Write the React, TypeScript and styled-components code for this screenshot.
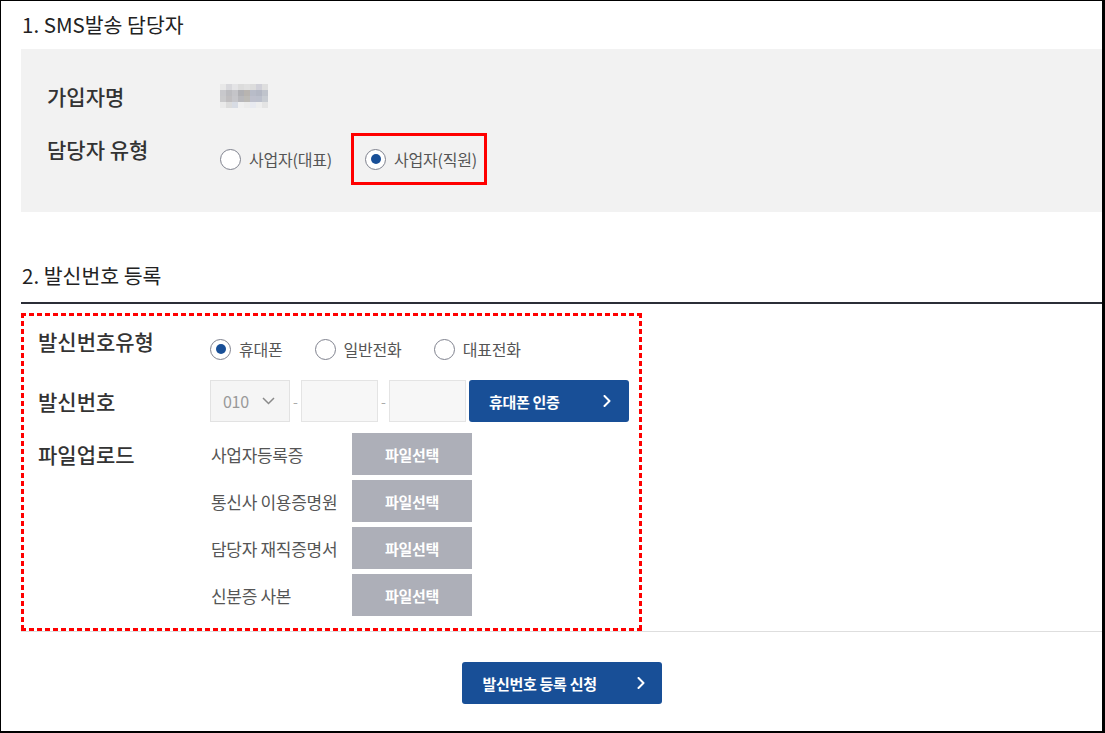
import React from 'react';
import styled, { createGlobalStyle } from 'styled-components';

const GlobalStyle = createGlobalStyle`
  html, body {
    margin: 0;
    padding: 0;
    background: #fff;
  }
  body {
    font-family: "Noto Sans CJK KR", "Noto Sans", sans-serif;
    color: #222;
  }
  * {
    box-sizing: border-box;
  }
`;

const BLUE = '#184f97';

const Frame = styled.div`
    width: 1105px;
    height: 733px;
    border-style: solid;
    border-color: #000;
    border-width: 1px 3px 2px 1px;
    padding: 0 0 0 20px;
    background: #fff;
`;

const SectionTitle = styled.h2<{ $top?: number; $line?: boolean }>`
    margin: ${(p) => p.$top || 0}px 0 0 0;
    height: ${(p) => (p.$line ? 52 : 48)}px;
    padding: 0 0 ${(p) => (p.$line ? 4 : 3)}px 1px;
    display: flex;
    align-items: center;
    font-size: 20.5px;
    font-weight: 400;
    letter-spacing: 0;
    color: #222;
    border-bottom: ${(p) => (p.$line ? '2px solid #2b2e37' : 'none')};
`;

const InfoBox = styled.div`
    background: #f2f2f2;
    height: 163px;
    padding: 31px 26px 0 26px;
    display: flex;
    flex-direction: column;
    gap: 21px;
`;

const InfoRow = styled.div`
    display: grid;
    grid-template-columns: 173px 1fr;
    align-items: start;
`;

const FieldLabel = styled.div`
    font-size: 21px;
    font-weight: 500;
    line-height: 32px;
    color: #333;
    letter-spacing: 0;
`;

const ValueCell = styled.div`
    height: 32px;
    display: flex;
    align-items: center;
`;

const RadioGroup = styled.div<{ $gap: number; $top?: number }>`
    display: flex;
    align-items: center;
    gap: ${(p) => p.$gap}px;
    margin-top: ${(p) => p.$top || 0}px;
`;

const RadioItem = styled.label`
    display: inline-flex;
    align-items: center;
    gap: 8px;
    height: 24px;
    font-size: 16px;
    color: #555;
    letter-spacing: -0.2px;
    cursor: pointer;
`;

const RadioCircle = styled.span<{ $checked?: boolean }>`
    position: relative;
    width: 21px;
    height: 21px;
    border-radius: 50%;
    border: 1.5px solid #7f828e;
    background: #fff;
    flex-shrink: 0;

    &::after {
        content: '';
        display: ${(p) => (p.$checked ? 'block' : 'none')};
        position: absolute;
        left: 50%;
        top: 50%;
        width: 10px;
        height: 10px;
        margin: -5px 0 0 -5px;
        border-radius: 50%;
        background: ${BLUE};
    }
`;

const Highlight = styled.div`
    height: 52px;
    display: flex;
    align-items: center;
    border: 3px solid #f00;
    padding: 0 7px 0 11px;
`;

const FormArea = styled.div`
    border-bottom: 1px solid #dedede;
    padding-top: 9px;
`;

const DashedFrame = styled.div`
    width: 621px;
    padding: 12px 0 15px 17px;
    background:
        repeating-linear-gradient(90deg, #f00 0 5px, transparent 5px 8px) top left / 100% 3px no-repeat,
        repeating-linear-gradient(90deg, #f00 0 5px, transparent 5px 8px) bottom left / 100% 3px no-repeat,
        repeating-linear-gradient(180deg, #f00 0 5px, transparent 5px 8px) top left / 3px 100% no-repeat,
        repeating-linear-gradient(180deg, #f00 0 5px, transparent 5px 8px) top right / 3px 100% no-repeat;
`;

const FormRow = styled.div<{ $top?: number; $center?: boolean }>`
    display: grid;
    grid-template-columns: 172px 1fr;
    align-items: ${(p) => (p.$center ? 'center' : 'start')};
    margin-top: ${(p) => p.$top || 0}px;
`;

const PhoneRow = styled.div`
    display: flex;
    align-items: center;
`;

const SelectBox = styled.div`
    width: 80px;
    height: 42px;
    background: #f5f5f5;
    border: 1px solid #e2e2e2;
    display: flex;
    align-items: center;
    justify-content: space-between;
    padding: 0 14px 0 12px;
    font-size: 16px;
    color: #999;
    letter-spacing: -0.3px;
`;

const Dash = styled.span`
    width: 11px;
    text-align: center;
    color: #aaa;
    font-size: 14px;
`;

const TextBox = styled.input`
    width: 77px;
    height: 42px;
    background: #f7f7f7;
    border: 1px solid #e4e4e4;
    outline: none;
    padding: 0 8px;
`;

const PrimaryButton = styled.button<{ $width: number; $pad: string; $left?: number }>`
    width: ${(p) => p.$width}px;
    height: 42px;
    margin-left: ${(p) => p.$left || 0}px;
    background: ${BLUE};
    border: none;
    border-radius: 3px;
    color: #fff;
    display: flex;
    align-items: center;
    justify-content: space-between;
    padding: ${(p) => p.$pad};
    font-family: "Noto Sans CJK KR", sans-serif;
    font-size: 15px;
    font-weight: 700;
    letter-spacing: -0.3px;
    cursor: pointer;
`;

const FileList = styled.div`
    display: flex;
    flex-direction: column;
    gap: 5px;
`;

const FileRow = styled.div`
    display: grid;
    grid-template-columns: 141px 120px;
    align-items: center;
    margin-left: 1px;
`;

const FileName = styled.span`
    font-size: 17px;
    color: #555;
    letter-spacing: -0.3px;
    white-space: nowrap;
`;

const FileButton = styled.button`
    height: 42px;
    background: #adafb8;
    border: none;
    color: #fff;
    font-family: "Noto Sans CJK KR", sans-serif;
    font-size: 15px;
    font-weight: 700;
    letter-spacing: -0.3px;
    cursor: pointer;
`;

const ButtonBar = styled.div`
    display: flex;
    justify-content: center;
    padding-top: 30px;
`;

const Chevron = ({ color = '#fff' }: { color?: string }) => (
    <svg width="8" height="12" viewBox="0 0 8 12" fill="none">
        <path d="M1.5 1l5 5-5 5" stroke={color} strokeWidth="2" strokeLinecap="round" strokeLinejoin="round" />
    </svg>
);

const ChevronDown = () => (
    <svg width="13" height="8" viewBox="0 0 13 8" fill="none">
        <path d="M1 1l5.5 5.5L12 1" stroke="#8a8a8a" strokeWidth="1.5" />
    </svg>
);

// pixelated (masked) member name
const mosaic = [
    ['#e8e8e8', '#d8d8dc', '#e4e4e6', '#dcdcdc', '#e0e0e0', '#dcdcdc', '#d0d0d8', '#dedede'],
    ['#c8c8cc', '#bcbcc0', '#c4c4c8', '#b0b0b4', '#b8b4b0', '#b8bcc8', '#b4b8c4', '#c0c4cc'],
    ['#cacacc', '#c0bec0', '#c6c6ca', '#b8b8bc', '#bcbab6', '#bec0cc', '#bcc0cc', '#c8ccd2'],
    ['#eaeaea', '#dcdcdc', '#d8dce4', '#f0f0f0', '#ececec', '#e8eaf0', '#eeeeee', '#e4e4e4'],
];

const MaskedName = () => (
    <svg width="48" height="24" viewBox="0 0 48 24">
        {mosaic.map((row, r) =>
            row.map((c, i) => <rect key={`${r}-${i}`} x={i * 6} y={r * 6} width="6" height="6" fill={c} />)
        )}
    </svg>
);

const Radio = ({ label, checked }: { label: string; checked?: boolean }) => (
    <RadioItem>
        <RadioCircle $checked={checked} />
        {label}
    </RadioItem>
);

const files = ['사업자등록증', '통신사 이용증명원', '담당자 재직증명서', '신분증 사본'];

export default function App() {
    return (
        <>
            <GlobalStyle />
            <Frame>
                <SectionTitle>1. SMS발송 담당자</SectionTitle>
                <InfoBox>
                    <InfoRow>
                        <FieldLabel>가입자명</FieldLabel>
                        <ValueCell>
                            <MaskedName />
                        </ValueCell>
                    </InfoRow>
                    <InfoRow>
                        <FieldLabel>담당자 유형</FieldLabel>
                        <RadioGroup $gap={19}>
                            <Radio label="사업자(대표)" />
                            <Highlight>
                                <Radio label="사업자(직원)" checked />
                            </Highlight>
                        </RadioGroup>
                    </InfoRow>
                </InfoBox>

                <SectionTitle $top={40} $line>2. 발신번호 등록</SectionTitle>
                <FormArea>
                    <DashedFrame>
                        <FormRow>
                            <FieldLabel>발신번호유형</FieldLabel>
                            <RadioGroup $gap={32} $top={12}>
                                <Radio label="휴대폰" checked />
                                <Radio label="일반전화" />
                                <Radio label="대표전화" />
                            </RadioGroup>
                        </FormRow>
                        <FormRow $top={19} $center>
                            <FieldLabel>발신번호</FieldLabel>
                            <PhoneRow>
                                <SelectBox>
                                    010
                                    <ChevronDown />
                                </SelectBox>
                                <Dash>-</Dash>
                                <TextBox />
                                <Dash>-</Dash>
                                <TextBox />
                                <PrimaryButton $width={160} $pad="0 18px 0 20px" $left={3}>
                                    휴대폰 인증
                                    <Chevron />
                                </PrimaryButton>
                            </PhoneRow>
                        </FormRow>
                        <FormRow $top={11}>
                            <FieldLabel style={{ marginTop: 5 }}>파일업로드</FieldLabel>
                            <FileList>
                                {files.map((f) => (
                                    <FileRow key={f}>
                                        <FileName>{f}</FileName>
                                        <FileButton>파일선택</FileButton>
                                    </FileRow>
                                ))}
                            </FileList>
                        </FormRow>
                    </DashedFrame>
                </FormArea>

                <ButtonBar>
                    <PrimaryButton $width={200} $pad="0 17px 0 21px">
                        발신번호 등록 신청
                        <Chevron />
                    </PrimaryButton>
                </ButtonBar>
            </Frame>
        </>
    );
}
